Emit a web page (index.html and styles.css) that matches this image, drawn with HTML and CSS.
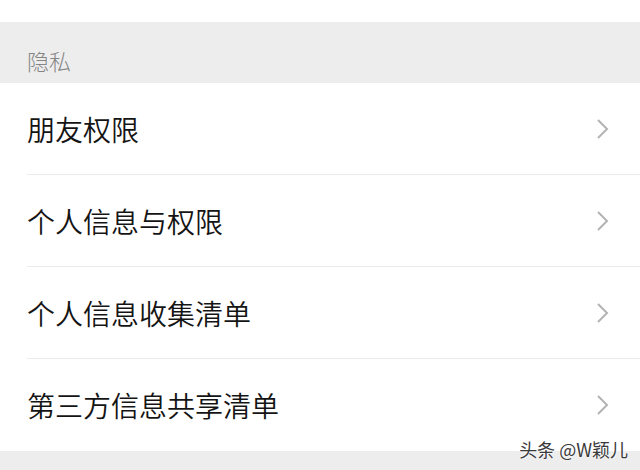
FILE: index.html
```html
<!DOCTYPE html>
<html lang="zh-CN">

<head>
    <meta charset="UTF-8">
    <meta name="viewport" content="width=device-width, initial-scale=1.0">
    <title>隐私</title>
    <link rel="stylesheet" href="styles.css">
</head>

<body>
    <div class="page">
        <div class="top-gap"></div>
        <div class="section-title">隐私</div>
        <ul class="menu">
            <li class="menu-item">
                <span class="label">朋友权限</span>
                <svg class="arrow" width="14" height="20" viewBox="0 0 14 20"><path d="M2 1 L11 10 L2 19" /></svg>
            </li>
            <li class="menu-item">
                <span class="label">个人信息与权限</span>
                <svg class="arrow" width="14" height="20" viewBox="0 0 14 20"><path d="M2 1 L11 10 L2 19" /></svg>
            </li>
            <li class="menu-item">
                <span class="label">个人信息收集清单</span>
                <svg class="arrow" width="14" height="20" viewBox="0 0 14 20"><path d="M2 1 L11 10 L2 19" /></svg>
            </li>
            <li class="menu-item">
                <span class="label">第三方信息共享清单</span>
                <svg class="arrow" width="14" height="20" viewBox="0 0 14 20"><path d="M2 1 L11 10 L2 19" /></svg>
            </li>
        </ul>
        <div class="bottom-gap"></div>
        <div class="watermark">头条 @W颖儿</div>
    </div>
</body>

</html>
```

FILE: styles.css
```css
* {
    padding: 0;
    margin: 0;
}

body {
    background: #fff;
    font-family: "Noto Sans CJK SC", "Noto Sans", sans-serif;
}

.page {
    position: relative;
    width: 640px;
    height: 470px;
    overflow: hidden;
}

.top-gap {
    height: 22px;
}

.section-title {
    height: 61px;
    box-sizing: border-box;
    padding: 25px 0 0 27px;
    background: #ededed;
    color: #858585;
    font-size: 22px;
    font-weight: 300;
    line-height: 26px;
}

.menu {
    list-style: none;
}

.menu-item {
    display: flex;
    align-items: center;
    justify-content: space-between;
    height: 92px;
    box-sizing: border-box;
    margin-left: 27px;
    padding-right: 30px;
    border-bottom: 1px solid #ececec;
}

.menu-item:last-child {
    border-bottom: none;
}

.menu-item .label {
    color: #141414;
    font-size: 28px;
    font-weight: 350;
    line-height: 32px;
}

.arrow path {
    fill: none;
    stroke: #b3b3b3;
    stroke-width: 2;
}

.bottom-gap {
    height: 20px;
    background: #ededed;
}

.watermark {
    position: absolute;
    right: 12px;
    bottom: 11px;
    color: #3a3a3a;
    font-size: 18px;
    line-height: 20px;
    text-shadow: 0 0 2px #fff, 0 0 2px #fff;
}
```
